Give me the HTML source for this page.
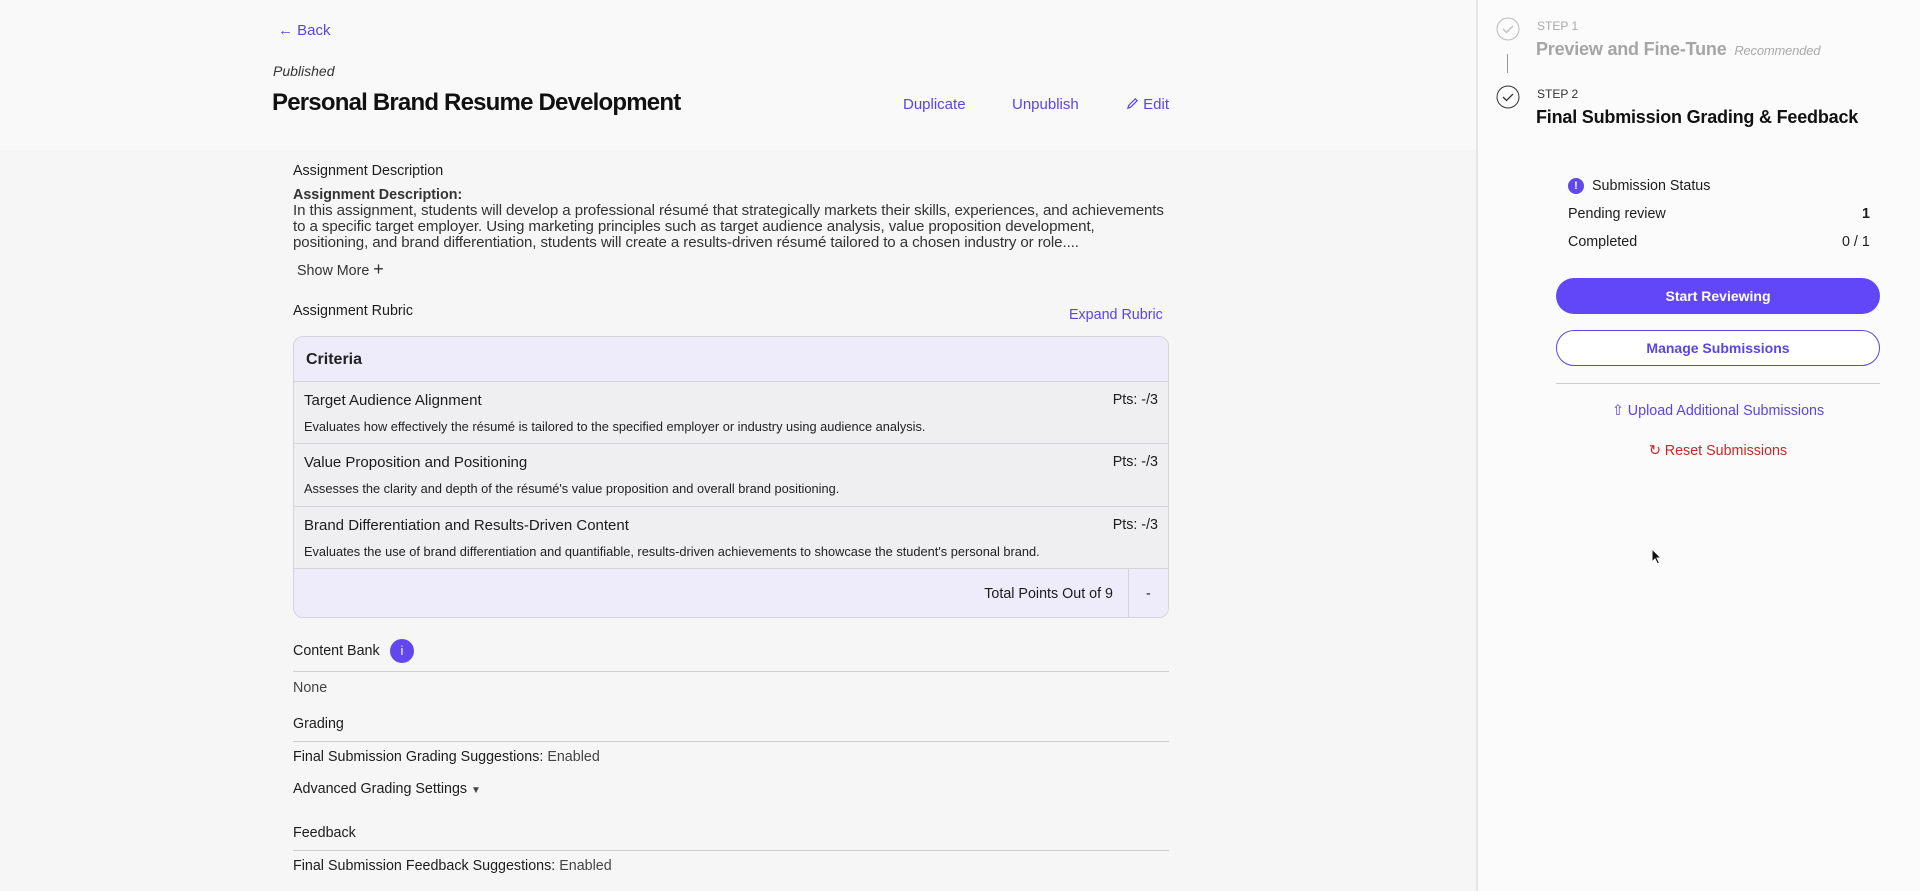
<!DOCTYPE html>
<html><head><meta charset="utf-8"><style>
*{box-sizing:border-box;margin:0;padding:0}
body{width:1920px;height:891px;overflow:hidden;background:#f6f6f7;font-family:"Liberation Sans",Arial,sans-serif;color:#1c1c1c;position:relative}
.a{position:absolute;white-space:nowrap}
.p{color:#5b45e0}
.t14{font-size:14.3px}
.line{position:absolute;height:1px;background:#cfcfcf}
</style></head><body>
<div class="a" style="left:0;top:0;width:1476px;height:150px;background:#f9f9fa"></div>
<!-- left -->
<div class="a p" style="left:278px;top:22px;font-size:15px">&#8592; Back</div>
<div class="a" style="left:273px;top:63px;font-size:14px;font-style:italic;color:#333">Published</div>
<div class="a" style="left:272px;top:89px;font-size:24px;font-weight:bold;letter-spacing:-0.8px;color:#111">Personal Brand Resume Development</div>
<div class="a p" style="left:903px;top:96px;font-size:15px">Duplicate</div>
<div class="a p" style="left:1012px;top:96px;font-size:15px">Unpublish</div>
<div class="a p" style="left:1126px;top:96px;font-size:15px"><svg width="13" height="13" viewBox="0 0 14 14" style="vertical-align:-1px"><path d="M2 12 L3 9 L10 2 L12 4 L5 11 Z" fill="none" stroke="#5b45e0" stroke-width="1.3"/></svg> Edit</div>

<div class="a t14" style="left:293px;top:163px">Assignment Description</div>
<div class="a t14" style="left:293px;top:187px;font-weight:bold;color:#333">Assignment Description:</div>
<div class="a" style="left:293px;top:203px;line-height:16px;color:#333;font-size:15.1px;letter-spacing:-0.1px">In this assignment, students will develop a professional résumé that strategically markets their skills, experiences, and achievements<br>to a specific target employer. Using marketing principles such as target audience analysis, value proposition development,<br>positioning, and brand differentiation, students will create a results-driven résumé tailored to a chosen industry or role....</div>
<div class="a t14" style="left:297px;top:263px;color:#333">Show More <span style="font-size:18px;line-height:10px">+</span></div>
<div class="a t14" style="left:293px;top:303px">Assignment Rubric</div>
<div class="a p t14" style="left:1069px;top:307px">Expand Rubric</div>

<div class="a" style="left:293px;top:336px;width:876px;height:282px;border:1px solid #d4d4dc;border-radius:10px;overflow:hidden;background:#efeff1">
 <div style="height:45px;background:#eeecfb;border-bottom:1px solid #d4d4d8;padding:14px 12px;font-size:16px;font-weight:bold;color:#222">Criteria</div>
 <div style="height:62px;border-bottom:1px solid #d4d4d8;position:relative">
  <div class="a" style="left:10px;top:10px;font-size:15px">Target Audience Alignment</div><div class="a t14" style="right:10px;top:10px">Pts: -/3</div>
  <div class="a" style="left:10px;top:37px;font-size:12.8px;color:#222">Evaluates how effectively the résumé is tailored to the specified employer or industry using audience analysis.</div></div>
 <div style="height:63px;border-bottom:1px solid #d4d4d8;position:relative">
  <div class="a" style="left:10px;top:10px;font-size:15px">Value Proposition and Positioning</div><div class="a t14" style="right:10px;top:10px">Pts: -/3</div>
  <div class="a" style="left:10px;top:37px;font-size:12.8px;color:#222">Assesses the clarity and depth of the résumé's value proposition and overall brand positioning.</div></div>
 <div style="height:62px;border-bottom:1px solid #d4d4d8;position:relative">
  <div class="a" style="left:10px;top:10px;font-size:15px">Brand Differentiation and Results-Driven Content</div><div class="a t14" style="right:10px;top:10px">Pts: -/3</div>
  <div class="a" style="left:10px;top:37px;font-size:12.8px;color:#222">Evaluates the use of brand differentiation and quantifiable, results-driven achievements to showcase the student's personal brand.</div></div>
 <div style="height:50px;background:#eeecfb;position:relative">
  <div class="a t14" style="right:55px;top:17px">Total Points Out of 9</div>
  <div class="a" style="left:834px;top:0;width:1px;height:50px;background:#d4d4d8"></div>
  <div class="a t14" style="left:852px;top:17px">-</div></div>
</div>

<div class="a t14" style="left:293px;top:643px">Content Bank</div>
<div class="a" style="left:390px;top:639px;width:24px;height:24px;border-radius:50%;background:#6247ef;color:#fff;font-size:13px;text-align:center;line-height:24px">i</div>
<div class="line" style="left:293px;top:671px;width:876px"></div>
<div class="a t14" style="left:293px;top:680px;color:#444">None</div>
<div class="a t14" style="left:293px;top:716px">Grading</div>
<div class="line" style="left:293px;top:741px;width:876px"></div>
<div class="a t14" style="left:293px;top:749px">Final Submission Grading Suggestions: <span style="color:#444">Enabled</span></div>
<div class="a t14" style="left:293px;top:781px">Advanced Grading Settings <span style="font-size:10px;color:#444">&#9660;</span></div>
<div class="a t14" style="left:293px;top:825px">Feedback</div>
<div class="line" style="left:293px;top:850px;width:876px"></div>
<div class="a t14" style="left:293px;top:858px">Final Submission Feedback Suggestions: <span style="color:#444">Enabled</span></div>

<!-- right -->
<div class="a" style="left:1476px;top:0;width:444px;height:891px;background:#fbfbfb;border-left:2px solid #e6e6e6"></div>
<svg class="a" style="left:1496px;top:17px" width="24" height="24" viewBox="0 0 24 24"><circle cx="12" cy="12" r="11" fill="none" stroke="#bbb" stroke-width="1"/><path d="M7 12 L10.5 15.5 L17 9" fill="none" stroke="#bbb" stroke-width="1.3"/></svg>
<div class="a" style="left:1507px;top:54px;width:1px;height:19px;background:#999"></div>
<svg class="a" style="left:1496px;top:85px" width="24" height="24" viewBox="0 0 24 24"><circle cx="12" cy="12" r="11" fill="none" stroke="#333" stroke-width="1"/><path d="M7 12 L10.5 15.5 L17 9" fill="none" stroke="#333" stroke-width="1.3"/></svg>
<div class="a" style="left:1537px;top:19px;font-size:12px;color:#aaa">STEP 1</div>
<div class="a" style="left:1536px;top:39px;font-size:18px;font-weight:bold;color:#a5a5a5;letter-spacing:-0.2px">Preview and Fine-Tune <span style="font-size:13px;font-weight:normal;font-style:italic;color:#aaa;margin-left:3px">Recommended</span></div>
<div class="a" style="left:1537px;top:87px;font-size:12px;color:#333">STEP 2</div>
<div class="a" style="left:1536px;top:107px;font-size:18px;font-weight:bold;color:#111;letter-spacing:-0.2px">Final Submission Grading &amp; Feedback</div>

<div class="a" style="left:1568px;top:178px;width:16px;height:16px;border-radius:50%;background:#6247ef;color:#fff;font-size:11px;font-weight:bold;text-align:center;line-height:16px">!</div>
<div class="a t14" style="left:1592px;top:178px">Submission Status</div>
<div class="a t14" style="left:1568px;top:206px">Pending review</div>
<div class="a t14" style="left:1862px;top:206px;font-weight:bold">1</div>
<div class="a t14" style="left:1568px;top:234px">Completed</div>
<div class="a t14" style="left:1842px;top:234px">0 / 1</div>
<div class="a" style="left:1556px;top:278px;width:324px;height:36px;border-radius:18px;background:#6147f8;color:#fff;font-size:14px;font-weight:bold;text-align:center;line-height:36px">Start Reviewing</div>
<div class="a" style="left:1556px;top:330px;width:324px;height:36px;border-radius:18px;border:1px solid #5b45e0;background:#fff;color:#5b45e0;font-size:14px;font-weight:bold;text-align:center;line-height:34px">Manage Submissions</div>
<div class="line" style="left:1556px;top:383px;width:324px;background:#ccc"></div>
<div class="a p t14" style="left:1606px;top:403px;width:224px;text-align:center">&#8679; Upload Additional Submissions</div>
<div class="a t14" style="left:1606px;top:443px;width:224px;text-align:center;color:#c62828">&#8635; Reset Submissions</div>
<svg class="a" style="left:1651px;top:548px" width="12" height="18" viewBox="0 0 12 18"><path d="M1 1 L1 14 L4 11 L6.5 16 L8.5 15 L6 10 L10 10 Z" fill="#111" stroke="#fff" stroke-width="1"/></svg>
</body></html>
